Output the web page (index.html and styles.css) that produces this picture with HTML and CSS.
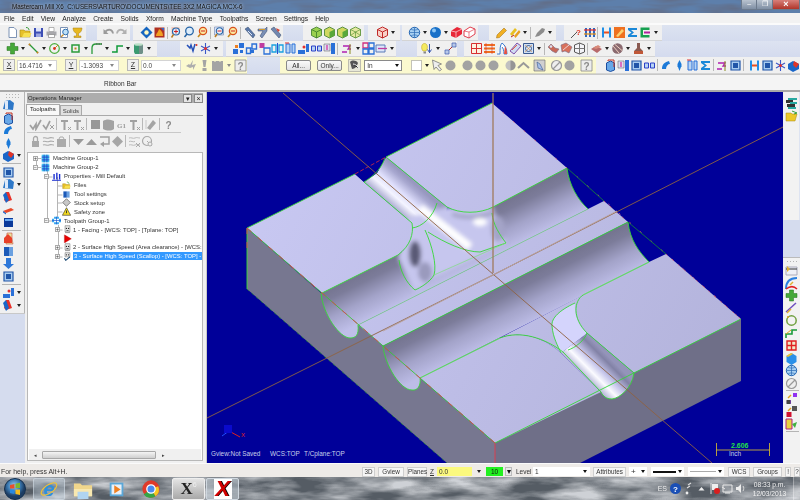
FILE: index.html
```html
<!DOCTYPE html>
<html lang="en">
<head>
<meta charset="utf-8">
<title>Mastercam Mill X6</title>
<link rel="stylesheet" href="styles.css">
</head>
<body>
<svg class="defs" aria-hidden="true">
<defs>
<filter id="cloud" x="0" y="0" width="100%" height="100%"><feTurbulence type="fractalNoise" baseFrequency="0.018 0.07" numOctaves="4" seed="7"/><feColorMatrix type="matrix" values="0 0 0 0 0.62  0 0 0 0 0.64  0 0 0 0 0.67  2.2 0 0 0 -0.7"/></filter>
<filter id="cloud2" x="0" y="0" width="100%" height="100%"><feTurbulence type="fractalNoise" baseFrequency="0.02 0.12" numOctaves="3" seed="3"/><feColorMatrix type="matrix" values="0 0 0 0 0.12  0 0 0 0 0.16  0 0 0 0 0.26  2.6 0 0 0 -1"/></filter>
<filter id="soft" x="-20%" y="-20%" width="140%" height="140%"><feGaussianBlur stdDeviation="2.2"/></filter>
<linearGradient id="floor1" gradientUnits="userSpaceOnUse" x1="450" y1="227.5" x2="470.5" y2="268.5"><stop offset="0" stop-color="#74748f"/><stop offset=".22" stop-color="#7c7c9a"/><stop offset=".6" stop-color="#a3a3c9"/><stop offset="1" stop-color="#bfbfe9"/></linearGradient>
<linearGradient id="floor2" gradientUnits="userSpaceOnUse" x1="500" y1="287" x2="520.5" y2="328"><stop offset="0" stop-color="#74748f"/><stop offset=".22" stop-color="#7c7c9a"/><stop offset=".6" stop-color="#a3a3c9"/><stop offset="1" stop-color="#bdbde7"/></linearGradient>
<linearGradient id="pad" gradientUnits="userSpaceOnUse" x1="260" y1="180" x2="740" y2="430"><stop offset="0" stop-color="#c8c8f2"/><stop offset="1" stop-color="#b2b2da"/></linearGradient>
<linearGradient id="groove1" gradientUnits="userSpaceOnUse" x1="388" y1="203" x2="409" y2="179"><stop offset="0" stop-color="#a9a9d0"/><stop offset=".3" stop-color="#f4f4ff"/><stop offset=".55" stop-color="#ddddfb"/><stop offset=".85" stop-color="#a8a8d0"/><stop offset="1" stop-color="#9898c0"/></linearGradient>
<linearGradient id="groove2" gradientUnits="userSpaceOnUse" x1="578" y1="372" x2="601" y2="349"><stop offset="0" stop-color="#a8a8d0"/><stop offset=".3" stop-color="#fbfbff"/><stop offset=".55" stop-color="#c4c4ea"/><stop offset=".85" stop-color="#8282a6"/><stop offset="1" stop-color="#9494ba"/></linearGradient>
<radialGradient id="orb" cx=".45" cy=".35"><stop offset="0" stop-color="#9fd0f2"/><stop offset=".6" stop-color="#3a78b0"/><stop offset="1" stop-color="#1d3d63"/></radialGradient>

<symbol id="doc" viewBox="0 0 13 13"><path d="M3 1.500h5l2.500 2.500v7.500H3z" fill="#fff" stroke="#7d93b5"/></symbol>
<symbol id="folder" viewBox="0 0 13 13"><path d="M1 11V4h4l1 1h5v6z" fill="#e6c02a" stroke="#a98914" stroke-width=".6"/><path d="M3 11l2-4h7.500l-2 4z" fill="#f7e050"/><path d="M7 1.500c2 0 3 1 3 2.500" fill="none" stroke="#3a9a3a"/></symbol>
<symbol id="disk" viewBox="0 0 13 13"><path d="M2 2h9v9H2z" fill="#3d4fb5"/><path d="M4 2h5v3.500H4z" fill="#dfe4f7"/><path d="M4 7.500h5V11H4z" fill="#9aa5e0"/></symbol>
<symbol id="print" viewBox="0 0 13 13"><path d="M4 1.500h5v4H4z" fill="#fff" stroke="#888" stroke-width=".6"/><path d="M1.500 5.500h10v4h-10z" fill="#a8a8ac"/><path d="M3.500 8.500h6v3h-6z" fill="#fff" stroke="#777" stroke-width=".6"/></symbol>
<symbol id="prev" viewBox="0 0 13 13"><path d="M2.500 1.500h7v10h-7z" fill="#fff" stroke="#7d93b5"/><circle cx="7.500" cy="6" r="2.800" fill="#bfe0f7" stroke="#2d6fb0"/><path d="M5.500 8.500l-2.500 2.500" stroke="#c58a2a" stroke-width="1.300"/></symbol>
<symbol id="cup" viewBox="0 0 13 13"><path d="M2 2h9c0 3-2 5-3.500 5.500V10H10v1.500H3V10h2.500V7.500C4 7 2 5 2 2z" fill="#e8b820" stroke="#a77d10" stroke-width=".5"/></symbol>
<symbol id="undo" viewBox="0 0 13 13"><path d="M3.500 5.500c3-3 7-2 7.500 2" fill="none" stroke="#9a9a9a" stroke-width="1.800"/><path d="M1.500 3v5h5z" fill="#9a9a9a"/></symbol>
<symbol id="redo" viewBox="0 0 13 13"><path d="M9.500 5.500c-3-3-7-2-7.500 2" fill="none" stroke="#b0b0b0" stroke-width="1.800"/><path d="M11.500 3v5h-5z" fill="#b0b0b0"/></symbol>
<symbol id="pan" viewBox="0 0 13 13"><path d="M6.500 .5l6 6-6 6-6-6z" fill="#1565c0"/><circle cx="6.500" cy="6.500" r="2.200" fill="#fff8c0"/></symbol>
<symbol id="fire" viewBox="0 0 13 13"><path d="M1.500 1.500h10v10h-10z" fill="#b03020"/><path d="M3 10c0-3 2-3 3-7 3 2 4 4 4 7z" fill="#f2a020"/><path d="M8 2h3v3z" fill="#306ad0"/></symbol>
<symbol id="lz" viewBox="0 0 13 13"><path d="M1.500 1h8v7h-8z" fill="#f0c8b8"/><circle cx="6" cy="5.500" r="3.500" fill="#dcecfa" stroke="#2866a8" stroke-width="1.200"/><path d="M4 5.500h4M6 3.500v4" stroke="#d02020"/><path d="M3.500 8.500L1.500 11.500" stroke="#b87a20" stroke-width="1.500"/></symbol>
<symbol id="lb" viewBox="0 0 13 13"><circle cx="6.500" cy="5" r="3.800" fill="#dcecfa" stroke="#2866a8" stroke-width="1.300"/><path d="M4 8l-2.500 3" stroke="#2866a8" stroke-width="1.600"/></symbol>
<symbol id="lr" viewBox="0 0 13 13"><circle cx="7" cy="5" r="3.600" fill="#fbeaa0" stroke="#d8501c" stroke-width="1.300"/><path d="M5 5h4" stroke="#d02020"/><path d="M4.500 8l-2.500 3" stroke="#c88a20" stroke-width="1.600"/></symbol>
<symbol id="ld" viewBox="0 0 13 13"><path d="M1.500 1h9v8h-9z" fill="#dce4f6" stroke="#7f93bb" stroke-width=".7"/><circle cx="6.500" cy="5" r="3.200" fill="#eaf3fc" stroke="#2866a8" stroke-width="1.100"/><path d="M4.500 5h4" stroke="#d02020"/><path d="M4 8l-2 3" stroke="#b87a20" stroke-width="1.500"/></symbol>
<symbol id="t1" viewBox="0 0 13 13"><path d="M2 3l3-2 7 8-2 3z" fill="#5b78a8" stroke="#2d4468" stroke-width=".5"/><path d="M5 5l4 4" stroke="#dfe8f8"/></symbol>
<symbol id="t2" viewBox="0 0 13 13"><path d="M2 3h7l2-2v4l-5 7-2-2 3-5H2z" fill="#7a90b6" stroke="#34456a" stroke-width=".5"/><path d="M3 3.500h6" stroke="#d09a30"/></symbol>
<symbol id="t3" viewBox="0 0 13 13"><path d="M2 3l3-2 7 8-2 3z" fill="#7288b0" stroke="#2d4468" stroke-width=".5"/><path d="M7 2l4 2-2 2z" fill="#d84030"/></symbol>
<symbol id="cg" viewBox="0 0 13 13"><path d="M6.500 1l5 2.500v6l-5 2.500-5-2.500v-6z" fill="#9ad050" stroke="#3b7a2a" stroke-width=".8"/><path d="M1.500 3.500l5 2.500 5-2.500M6.500 6v6" fill="none" stroke="#3b7a2a" stroke-width=".8"/></symbol>
<symbol id="cg2" viewBox="0 0 13 13"><path d="M6.500 1l5 2.500v6l-5 2.500-5-2.500v-6z" fill="#d0d860" stroke="#3b7a2a" stroke-width=".8"/><path d="M6.500 6l5-2.500v6l-5 2.500z" fill="#58a83a"/></symbol>
<symbol id="cg3" viewBox="0 0 13 13"><path d="M6.500 1l5 2.500v6l-5 2.500-5-2.500v-6z" fill="#e4e8a0" stroke="#4c8a2a" stroke-width=".8"/><path d="M1.500 3.500l5 2.500 5-2.500M6.500 6v6M1.500 9.500l5-3.500 5 3.500" fill="none" stroke="#4c8a2a" stroke-width=".6"/></symbol>
<symbol id="cr" viewBox="0 0 13 13"><path d="M6.500 1l5 2.500v6l-5 2.500-5-2.500v-6z" fill="#f8d0c8" stroke="#c02828" stroke-width="1"/><path d="M1.500 3.500l5 2.500 5-2.500M6.500 6v6" fill="none" stroke="#c02828"/></symbol>
<symbol id="globe" viewBox="0 0 13 13"><circle cx="6.500" cy="6.500" r="5.200" fill="#a8d0f2" stroke="#2a6ab5"/><path d="M1.500 6.500h10M6.500 1.300v10.400M3 3c2 1.500 5 1.500 7 0M3 10c2-1.500 5-1.500 7 0" fill="none" stroke="#2a6ab5" stroke-width=".7"/></symbol>
<symbol id="ball" viewBox="0 0 13 13"><circle cx="6.500" cy="6.500" r="5.500" fill="#1870c8"/><circle cx="5" cy="4.500" r="2" fill="#8cc6f5"/></symbol>
<symbol id="rc" viewBox="0 0 13 13"><path d="M1 5l6-4 5 2v5l-6 4-5-2z" fill="#e82838"/><path d="M6 6l6-3M6 6v6M6 6L1 5" stroke="#fff" stroke-width=".6"/></symbol>
<symbol id="rco" viewBox="0 0 13 13"><path d="M1 5l6-4 5 2v5l-6 4-5-2z" fill="#fff" stroke="#e04050"/><path d="M6 6l6-3M6 6v6M6 6L1 5" stroke="#e04050" stroke-width=".7"/></symbol>
<symbol id="pen" viewBox="0 0 13 13"><path d="M2 9L9 2l2.500 2.500-7 7L1.500 12z" fill="#f2b020" stroke="#9a6a10" stroke-width=".5"/></symbol>
<symbol id="pen2" viewBox="0 0 13 13"><path d="M2 8l5-6 2 2-5 6z" fill="#e8c020"/><path d="M6 10l5-6 1.500 2-5 6z" fill="#e8a020"/><path d="M3 11l3-2" stroke="#c02020"/></symbol>
<symbol id="gt" viewBox="0 0 13 13"><path d="M2 11l2-4 5-5 3 1-1 3-5 4z" fill="#8c8c8c"/></symbol>
<symbol id="qa" viewBox="0 0 13 13"><path d="M1 12l6-6" stroke="#555"/><text x="6" y="8.500" class="qm">?</text></symbol>
<symbol id="bars" viewBox="0 0 13 13"><path d="M2 2h2v9H2zM6 2h2v9H6zM10 2h2v9h-2z" fill="#2f67c0"/><path d="M1 4h12" stroke="#e03030" stroke-width="1.300"/><path d="M1 8h12" stroke="#e09020" stroke-width="1.300"/></symbol>
<symbol id="prop" viewBox="0 0 13 13"><path d="M2 3h2v8H2zM6 1h2v10H6zM10 3h2v8h-2z" fill="#1c2fd0"/><path d="M0 12h13" stroke="#1c2fd0" stroke-width="1.400"/></symbol>
<symbol id="hb" viewBox="0 0 13 13"><path d="M2 1.500h2v10H2zM9 1.500h2v10H9z" fill="#2090e8"/><path d="M4 6.500h5" stroke="#e85020" stroke-width="2"/></symbol>
<symbol id="or" viewBox="0 0 13 13"><path d="M1 1h11v11H1z" fill="#ef7020"/><path d="M3 10l6-7 2 2-6 6z" fill="#fbd070"/></symbol>
<symbol id="sg" viewBox="0 0 13 13"><path d="M2 2h9v2H5l3 2.500L5 9h6v2H2V9l3.500-2.500L2 4z" fill="#1a88d8"/></symbol>
<symbol id="gb" viewBox="0 0 13 13"><path d="M1.500 1.500h9v2.500h-6.500v5h6.500v2.500h-9z" fill="#16a050"/><path d="M5 5.500h6v2H5z" fill="#b020a0"/></symbol>
<symbol id="plus" viewBox="0 0 13 13"><path d="M4.500 1h4v3.500H12v4H8.500V12h-4V8.500H1v-4h3.500z" fill="#46a83a" stroke="#25701f" stroke-width=".5"/></symbol>
<symbol id="ln" viewBox="0 0 13 13"><path d="M2 2l9 9" stroke="#2a9a3a" stroke-width="1.200"/><circle cx="2.500" cy="2.500" r="1" fill="#d08020"/><circle cx="10.500" cy="10.500" r="1" fill="#d08020"/></symbol>
<symbol id="ci" viewBox="0 0 13 13"><circle cx="6.500" cy="6.500" r="4.800" fill="none" stroke="#4cae3c" stroke-width="1.200"/><circle cx="6.500" cy="6.500" r="1.400" fill="#d83020"/><path d="M7 6l3-3" stroke="#d08020"/></symbol>
<symbol id="rg" viewBox="0 0 13 13"><path d="M3 3h7v7H3z" fill="none" stroke="#2a9a3a" stroke-width="1.500"/><path d="M5.500 5.500h2v2h-2z" fill="#c08020"/></symbol>
<symbol id="fl" viewBox="0 0 13 13"><path d="M2 12V6c0-3 1-4 4-4h6" fill="none" stroke="#2a9a3a" stroke-width="1.300"/><path d="M6 2h6" stroke="#555" stroke-dasharray="1.500 1"/></symbol>
<symbol id="pa" viewBox="0 0 13 13"><path d="M1 10h5V4h6" fill="none" stroke="#0f9a38" stroke-width="1.500"/></symbol>
<symbol id="cy" viewBox="0 0 13 13"><path d="M2 2h9v8l-1 2H3l-1-2z" fill="#3a9a70"/><path d="M7 2h4v8l-1 2H7z" fill="#6f8f88"/><ellipse cx="6.500" cy="2.500" rx="4.500" ry="1.300" fill="#bce0c8"/></symbol>
<symbol id="wi" viewBox="0 0 13 13"><path d="M1 3l3 3 1-3 2 6 2-7" fill="none" stroke="#2550b8" stroke-width="1.500"/><circle cx="10.500" cy="3" r="1" fill="#d83020"/></symbol>
<symbol id="xs" viewBox="0 0 13 13"><path d="M6.500 1v11M2 4l9 5M11 4L2 9" stroke="#3a58c8" stroke-width="1.100"/><circle cx="6.500" cy="6.500" r="1.500" fill="#e03030"/></symbol>
<symbol id="tpg" viewBox="0 0 13 13"><path d="M3 1h7v3h3v5h-3v3H3V9H0V4h3z" fill="#3aa8f0"/><path d="M3 4h7v5H3z" fill="#fff"/><path d="M0 6.500h13M6.500 1v11" stroke="#1c5ad0"/></symbol>
<symbol id="x1" viewBox="0 0 13 13"><path d="M1 7h5v5H1zM7 1h5v5H7z" fill="#2a70d8"/><path d="M3 3h3v3H3z" fill="#ef8020"/><path d="M8 8h3v3H8z" fill="#2a70d8"/></symbol>
<symbol id="x2" viewBox="0 0 13 13"><path d="M1.500 6h4v5.500h-4zM7 2h4.500v5H7z" fill="none" stroke="#2a70d8" stroke-width="1.400"/><path d="M6 8h3v3H6z" fill="#2a70d8"/></symbol>
<symbol id="x3" viewBox="0 0 13 13"><path d="M1.500 1h5v5h-5z" fill="#c03ca0"/><path d="M6 6h6v6H6z" fill="none" stroke="#2a70d8" stroke-width="1.300"/></symbol>
<symbol id="x4" viewBox="0 0 13 13"><path d="M1 3h4v7H1zM8 3h4v7H8z" fill="none" stroke="#18a0e0" stroke-width="1.300"/><path d="M6.500 1v11" stroke="#2a50d0"/></symbol>
<symbol id="x5" viewBox="0 0 13 13"><path d="M2 2h4v9H2zM8 2h3v9H8z" fill="#b8d4f4" stroke="#2a70d8"/><path d="M1 1h4" stroke="#e03030"/></symbol>
<symbol id="x6" viewBox="0 0 13 13"><path d="M1 8h7v4H1z" fill="#2a70d8"/><path d="M9 2h3v8H9z" fill="#2a70d8"/><circle cx="7" cy="5" r="1.500" fill="#e03030"/></symbol>
<symbol id="x7" viewBox="0 0 13 13"><path d="M1.500 4h4v5h-4zM7.500 4h4v5h-4z" fill="#b8d4f4" stroke="#2a40c8"/></symbol>
<symbol id="x8" viewBox="0 0 13 13"><path d="M1 2h6v7H1z" fill="#dcdcf0" stroke="#555" stroke-width=".5"/><path d="M8 1h4v11H8z" fill="#2a70d8"/><path d="M3 3h2v5H3z" fill="#d870c0"/></symbol>
<symbol id="an" viewBox="0 0 13 13"><path d="M2 4h7l-2 3h3M6 10H1" fill="none" stroke="#b020b0" stroke-width="1.300"/><path d="M9 2v10" stroke="#8a8a20"/></symbol>
<symbol id="gd" viewBox="0 0 13 13"><path d="M1 1h5v5H1z" fill="none" stroke="#d03080" stroke-width="1.300"/><path d="M7 1h5v5H7zM1 7h5v5H1zM7 7h5v5H7z" fill="none" stroke="#2a70d8" stroke-width="1.300"/></symbol>
<symbol id="mg" viewBox="0 0 13 13"><path d="M1 1h11v11H1z" fill="#46c4ee"/><path d="M1 4.500h11M1 8.500h11M4.500 1v11M8.500 1v11" stroke="#1c34c8" stroke-width="1.100"/></symbol>
<symbol id="ly" viewBox="0 0 13 13"><path d="M1 3h9v7H1z" fill="#dce6fa" stroke="#5a7ab8"/><path d="M3 6.500h9" stroke="#c03ca0" stroke-width="1.300"/></symbol>
<symbol id="bu" viewBox="0 0 13 13"><path d="M4 9C2 7 2 1.500 5.500 1.500S9 7 7 9z" fill="#f4ea60" stroke="#c0a820" stroke-width=".6"/><path d="M4.500 9.500h2.500v2H4.500z" fill="#888"/><path d="M10.500 2v9M8.500 7.500l2 3 2-3" fill="none" stroke="#3a5ab0"/></symbol>
<symbol id="ch" viewBox="0 0 13 13"><path d="M2 11l9-9" stroke="#b03030"/><path d="M1 8h4v4H1zM8 1h4v4H8z" fill="#b8c8e8" stroke="#3a5ab0" stroke-width=".7"/></symbol>
<symbol id="rt" viewBox="0 0 13 13"><path d="M1.500 1.500h10v10h-10z" fill="#fdf2e0" stroke="#d83030"/><path d="M6.500 1.500v10M1.500 6.500h10" stroke="#d83030"/></symbol>
<symbol id="rs" viewBox="0 0 13 13"><path d="M1 2h11v2H1zM1 5.500h11v2H1zM1 9h11v2H1z" fill="#ef7020"/><path d="M3 1v11M9 1v11" stroke="#d83030" stroke-width=".6"/></symbol>
<symbol id="sa" viewBox="0 0 13 13"><path d="M1 12h3C4 7 4 3 6 1c3 2 5 6 5 11H8C8 8 7 6 6 5" fill="#fff" stroke="#3a7ad0"/><path d="M8 12h3C11 8 10 6 9 4z" fill="#e85040"/></symbol>
<symbol id="sk" viewBox="0 0 13 13"><path d="M1 9l7-8 4 3-7 8z" fill="#d0dcf4" stroke="#8050a8"/><path d="M3 8l5-5" stroke="#e86040"/></symbol>
<symbol id="ho" viewBox="0 0 13 13"><path d="M1.500 1.500h10v10h-10z" fill="#cfe0f6" stroke="#3a5a90"/><circle cx="6.500" cy="6.500" r="3" fill="none" stroke="#3a5a90"/><path d="M3 3l7 7M10 3l-7 7" stroke="#e09040" stroke-width=".6"/></symbol>
<symbol id="m1" viewBox="0 0 13 13"><path d="M1 5l3-3 4 4 4 1-3 4-4-2z" fill="#c86858" stroke="#7a6a80" stroke-width=".6"/><circle cx="4" cy="4.500" r="1.300" fill="#dce4f4"/></symbol>
<symbol id="m2" viewBox="0 0 13 13"><path d="M1 3l5-2 6 4-3 6-4-2-3 1z" fill="#d8705a" stroke="#7a6a80" stroke-width=".6"/><path d="M3 8l6-5" stroke="#f0d0d0"/></symbol>
<symbol id="m3" viewBox="0 0 13 13"><path d="M1.500 3l5-2 5 2v7l-5 2-5-2z" fill="#f4f4f8" stroke="#555"/><path d="M6.500 1v11M1.500 6.500h10" stroke="#777"/></symbol>
<symbol id="m4" viewBox="0 0 13 13"><path d="M1 7l5-3 6 3-5 4z" fill="#b86a6a"/><path d="M3 6l5-3 3 2-5 2z" fill="#d88a7a"/></symbol>
<symbol id="m5" viewBox="0 0 13 13"><circle cx="6.500" cy="6.500" r="5.300" fill="#8a6a70"/><path d="M2 4l6 7M4 2.500l7 6" stroke="#f0d0c0"/></symbol>
<symbol id="m6" viewBox="0 0 13 13"><path d="M5 1h3v5l3 3v3H2V9l3-3z" fill="#8a5a50"/><path d="M2 9h9v3H2z" fill="#c05838"/></symbol>
<symbol id="gdot" viewBox="0 0 13 13"><circle cx="6.500" cy="6.500" r="5" fill="#a2a2a2"/></symbol>
<symbol id="gdotl" viewBox="0 0 13 13"><circle cx="6.500" cy="6.500" r="5" fill="#c0c0c0"/><path d="M6.500 1.500a5 5 0 0 1 0 10z" fill="#959595"/></symbol>
<symbol id="bolt" viewBox="0 0 13 13"><path d="M1 7l3-2 1 1 3-5-1 5 4-1-3 6 0-3-3 1z" fill="#adadad"/></symbol>
<symbol id="excl" viewBox="0 0 13 13"><path d="M4.500 1h4l-1 7h-2z" fill="#a4a4a4"/><path d="M4.500 9h4v3h-4z" fill="#a4a4a4"/></symbol>
<symbol id="warn" viewBox="0 0 13 13"><path d="M6.500 1l6 11H.5z" fill="#f0d820" stroke="#222" stroke-width=".8"/><path d="M6.500 5v4" stroke="#222" stroke-width="1.200"/></symbol>
<symbol id="gsq" viewBox="0 0 13 13"><path d="M1 2h2l1 1 1-1h3l1 1 1-1h2v10H1z" fill="#a4a4a4"/></symbol>
<symbol id="qb" viewBox="0 0 13 13"><path d="M1 1h11v11H1z" fill="#ededed" stroke="#888" stroke-width=".8"/><text x="6.500" y="10.500" class="qg">?</text></symbol>
<symbol id="dsq" viewBox="0 0 13 13"><path d="M1.500 1.500h10v10h-10z" fill="#fff" stroke="#888" stroke-dasharray="1 1"/></symbol>
<symbol id="arw" viewBox="0 0 13 13"><path d="M1.500 1l9 4-3.500 1.500 3.500 4-2 1.500-3.500-4-2 2.500z" fill="#eee" stroke="#777" stroke-width=".8"/></symbol>
<symbol id="arch" viewBox="0 0 13 13"><path d="M1 9l5.500-5L12 9" fill="none" stroke="#9a9a9a" stroke-width="2"/></symbol>
<symbol id="sball" viewBox="0 0 13 13"><path d="M.5.500h12v12H.500z" fill="#e8e8d8" stroke="#999" stroke-width=".6"/><path d="M2 3c2-2 6-2 8 1-1 3-3 6-6 6z" fill="#555"/><path d="M5 5c2 0 5 2 6 5" stroke="#fff"/></symbol>
<symbol id="tick" viewBox="0 0 13 13"><path d="M1 1h11v11H1z" fill="#d0d0d0" stroke="#666" stroke-width=".6"/><path d="M4 3l1 6 5 2-3-6z" fill="#a8c0e8" stroke="#38588f" stroke-width=".6"/></symbol>
<symbol id="stop" viewBox="0 0 13 13"><circle cx="6.500" cy="6.500" r="5" fill="#eee" stroke="#999" stroke-width="1.200"/><path d="M3 10l7-7" stroke="#999" stroke-width="1.200"/></symbol>
<symbol id="sq9" viewBox="0 0 13 13"><path d="M2 2h9v9H2z" fill="#979797"/></symbol>
<symbol id="vf" viewBox="0 0 13 13"><path d="M1 10l2-8 5-1 4 3-1 7z" fill="#2e78c8"/><path d="M3 2h3v8H3z" fill="#dde9f9"/></symbol>
<symbol id="vb" viewBox="0 0 13 13"><path d="M2.500 4v7l4 1.500 4-1.500V4L6.500 2z" fill="#68a8e8" stroke="#1c4fa0"/><path d="M4 2V1h6v7" stroke="#c03020" fill="none"/></symbol>
<symbol id="va" viewBox="0 0 13 13"><path d="M2 10C2 5 5 3 9 2l1 3C8 5 6 7 6 10z" fill="#1c7ad8"/></symbol>
<symbol id="vg" viewBox="0 0 13 13"><path d="M6.500 1l2 4h-4zM4.500 5h4v3h-4zM5 8h3l-1.500 4z" fill="#1c7ad8"/></symbol>
<symbol id="vc" viewBox="0 0 13 13"><path d="M1 5l5-3 6 3v5l-6 3-5-3z" fill="#1a66c8"/><path d="M7 2l5 3-3 4-3-3z" fill="#e03428"/></symbol>
<symbol id="vh" viewBox="0 0 13 13"><path d="M2 2h9v9H2z" fill="#a8ccf0" stroke="#2055a8" stroke-width="1.200"/><path d="M4 4h5v5H4z" fill="#2055a8"/></symbol>
<symbol id="vt" viewBox="0 0 13 13"><path d="M4 1h3l3 8-6 2-2-2z" fill="#e83028"/><path d="M1 4l3-3 3 8-3 3z" fill="#1a66c8"/></symbol>
<symbol id="vs" viewBox="0 0 13 13"><path d="M1 8l8-3 3 2-8 3z" fill="#e84828"/><path d="M1 8l3 2v1.500L1 9.500z" fill="#2468c8"/></symbol>
<symbol id="vd" viewBox="0 0 13 13"><path d="M2 2h9v9H2z" fill="#0c3a9a"/><path d="M3 3l8 0v2H3z" fill="#68a8f0"/></symbol>
<symbol id="vo" viewBox="0 0 13 13"><path d="M5 1h5v5l1 6H4z" fill="#e8e0a0" stroke="#c03020" stroke-width=".5"/><path d="M2 6l4-4 4 4v5H2z" fill="#e84028"/></symbol>
<symbol id="vk" viewBox="0 0 13 13"><path d="M2 2h5v9H2z" fill="#1c5ab8"/><path d="M7 2h4v9H7z" fill="#6aa0e0"/></symbol>
<symbol id="vw" viewBox="0 0 13 13"><path d="M4 1h5v6h3l-5.500 5L1 7h3z" fill="#2e78d8"/></symbol>
<symbol id="r1" viewBox="0 0 13 13"><path d="M1 3h7v3H1zM2 7h8v3H2z" fill="#333"/><path d="M3 1h9v2H3zM5 5h7v2H5zM3 10h8v2H3z" fill="#28a8a0"/></symbol>
<symbol id="r2" viewBox="0 0 13 13"><path d="M1 3h5l1 1h5l-2 7H1z" fill="#ecc82c" stroke="#a88a10" stroke-width=".5"/><path d="M7 1l5 2-3 1" stroke="#3aa040" fill="none"/></symbol>
<symbol id="r3" viewBox="0 0 13 13"><path d="M1 3h11v8H1z" fill="#eef0f6" stroke="#aab"/><path d="M1 5h11" stroke="#333"/><path d="M2 2v6l3-3z" fill="#e0b030"/></symbol>
<symbol id="r4" viewBox="0 0 13 13"><path d="M1 12C1 5 5 1 12 1" fill="none" stroke="#2a80e0" stroke-width="2"/><path d="M1 12C5 9 9 9 12 12" fill="none" stroke="#e02020" stroke-width="1.500"/><path d="M5 8l3-3" stroke="#e0b030" stroke-width="1.500"/></symbol>
<symbol id="r5" viewBox="0 0 13 13"><path d="M1 10l10-9" stroke="#7050c0" stroke-width="1.500"/><path d="M2 11l4-4" stroke="#e0b030" stroke-width="1.500"/></symbol>
<symbol id="r6" viewBox="0 0 13 13"><circle cx="6.500" cy="6.500" r="4.700" fill="none" stroke="#70a040" stroke-width="1.500"/><circle cx="3" cy="3" r="1" fill="#d8a020"/></symbol>
<symbol id="r7" viewBox="0 0 13 13"><path d="M1 11V7h6V3h5" fill="none" stroke="#1a9a3a" stroke-width="1.600"/><path d="M1 7l5-4" stroke="#e0a020"/></symbol>
<symbol id="r8" viewBox="0 0 13 13"><path d="M2 2h9v9H2z" fill="#f0e8c8" stroke="#e02020" stroke-width="1.400"/><path d="M6.500 2v9M2 6.500h9" stroke="#e02020" stroke-width="1.400"/></symbol>
<symbol id="r9" viewBox="0 0 13 13"><path d="M6.500 1l5 3v6l-5 3-5-3V4z" fill="#2a90e8"/><path d="M1 4l5-3 2 1-5 3z" fill="#f0c030"/></symbol>
<symbol id="r10" viewBox="0 0 13 13"><path d="M1 10l5-2v4zM8 1h4v4H8z" fill="#9030f0"/><path d="M1.500 8h4v4h-4z" fill="#444"/><path d="M3 6l3-3" stroke="#e0a020" stroke-width="1.400"/></symbol>
<symbol id="r11" viewBox="0 0 13 13"><path d="M7 1h5v5H7z" fill="#555"/><path d="M1.500 7h5v5h-5z" fill="#d01030"/><path d="M3 6l3-3" stroke="#e0a020" stroke-width="1.400"/></symbol>
<symbol id="r12" viewBox="0 0 13 13"><path d="M1 2h6v10H1z" fill="#e8d040" stroke="#b02080"/><path d="M7 7l5-2-2 6z" fill="#40b040"/></symbol>
<symbol id="t-ok" viewBox="0 0 13 13"><path d="M1 7l3 4 3-5 0 5 5-9" fill="none" stroke="#a0a0a0" stroke-width="1.700"/></symbol>
<symbol id="t-x" viewBox="0 0 13 13"><path d="M1 7l3 4 4-8" fill="none" stroke="#a0a0a0" stroke-width="1.700"/><path d="M8 7l4 4M12 7l-4 4" stroke="#a0a0a0"/></symbol>
<symbol id="t-t" viewBox="0 0 13 13"><path d="M2 2h7v2H6.500v8h-2V4H2z" fill="#a0a0a0"/><path d="M9 9l3 3M12 9l-3 3" stroke="#a0a0a0"/></symbol>
<symbol id="t-bk" viewBox="0 0 13 13"><path d="M1 3c3-2 7-2 11 0v8c-3 2-7 2-11 0z" fill="#a2a2a2"/></symbol>
<symbol id="t-g" viewBox="0 0 13 13"><text x="6.500" y="10" class="qg1">G1</text></symbol>
<symbol id="t-pen" viewBox="0 0 13 13"><path d="M2 10l6-8 3 3-6 7z" fill="#a4a4a4"/><path d="M1 2v9" stroke="#c8c8c8"/></symbol>
<symbol id="t-q" viewBox="0 0 13 13"><text x="6.500" y="11" class="qg">?</text></symbol>
<symbol id="t-lock" viewBox="0 0 13 13"><path d="M3 6h7v6H3z" fill="#a8a8a8"/><path d="M4.500 6V3.500a2 2 0 0 1 4 0V6" fill="none" stroke="#a8a8a8" stroke-width="1.300"/></symbol>
<symbol id="t-wav" viewBox="0 0 13 13"><path d="M1 3c2-1 4 1 6 0s3 0 5 0M1 6.500c2-1 4 1 6 0s3 0 5 0M1 10c2-1 4 1 6 0s3 0 5 0" fill="none" stroke="#aaa" stroke-width="1.100"/></symbol>
<symbol id="t-lock2" viewBox="0 0 13 13"><path d="M2 4h9v8H2z" fill="#aaa"/><path d="M4 4l1-2h3l1 2" fill="none" stroke="#aaa"/></symbol>
<symbol id="t-dn" viewBox="0 0 13 13"><path d="M1 4h11L6.500 10z" fill="#9a9a9a"/></symbol>
<symbol id="t-up" viewBox="0 0 13 13"><path d="M1 10h11L6.500 4z" fill="#9a9a9a"/></symbol>
<symbol id="t-rc" viewBox="0 0 13 13"><path d="M2 2h9v7H5" fill="none" stroke="#a0a0a0" stroke-width="1.500"/><path d="M6 6.500V12l-4-3z" fill="#a0a0a0"/></symbol>
<symbol id="t-dia" viewBox="0 0 13 13"><path d="M6.500 1l5.500 5.500-5.500 5.500L1 6.500z" fill="#a6a6a6"/></symbol>
<symbol id="stock" viewBox="0 0 13 13"><path d="M6.500 1l5.500 5.500-5.500 5.500L1 6.500z" fill="#c8c8c8" stroke="#333" stroke-width=".8"/></symbol>
<symbol id="t-ws" viewBox="0 0 13 13"><path d="M1 3c2-1 4 1 6 0s3 0 5 0M1 6.500c2-1 4 1 6 0M1 10c2-1 4 1 6 0s3 0 5 0" fill="none" stroke="#bbb"/><path d="M8 8l4 4M12 8l-4 4" stroke="#aaa"/></symbol>
<symbol id="t-rf" viewBox="0 0 13 13"><circle cx="6" cy="6" r="4.500" fill="none" stroke="#aaa" stroke-width="1.200"/><path d="M6 6l5 5" stroke="#aaa"/><circle cx="9" cy="9" r="2" fill="#eee" stroke="#aaa"/></symbol>
<symbol id="flag" viewBox="0 0 13 13"><path d="M2 1v12M2.500 1.500L12 7l-9.500 5.500z" fill="#e80000" stroke="#c00000" stroke-width=".6"/></symbol>
<symbol id="op" viewBox="0 0 13 13"><path d="M3 1h7v9H3z" fill="#e4e4e4" stroke="#666" stroke-width=".7"/><circle cx="5" cy="5" r=".9" fill="#222"/><circle cx="8" cy="5" r=".9" fill="#222"/><path d="M5 8h3" stroke="#222"/><path d="M3 11h7" stroke="#888" stroke-width="1.200"/></symbol>
<symbol id="opk" viewBox="0 0 13 13"><path d="M3 1h7v6H3z" fill="#e4e4e4" stroke="#666" stroke-width=".7"/><circle cx="5" cy="4" r=".9" fill="#222"/><circle cx="8" cy="4" r=".9" fill="#222"/><path d="M2 9l2 3 6-5" fill="none" stroke="#14436e" stroke-width="1.500"/></symbol>
</defs>
</svg>

<div class="app">
  <header class="title">
    <svg class="wall" aria-hidden="true"><rect width="800" height="13" fill="#5d7fab"/><rect width="800" height="13" filter="url(#cloud2)"/></svg>
    <span class="title-text">Mastercam Mill X6&nbsp; C:\USERS\ARTURO\DOCUMENTS\TEE 3X2 MAGICA.MCX-6</span>
    <div class="winbtns"><span class="wb">&#8211;</span><span class="wb">&#10064;</span><span class="wb wb-x">&#215;</span></div>
  </header>

  <nav class="menu"><span>File</span><span>Edit</span><span>View</span><span>Analyze</span><span>Create</span><span>Solids</span><span>Xform</span><span>Machine Type</span><span>Toolpaths</span><span>Screen</span><span>Settings</span><span>Help</span></nav>

  <div class="row r1">
    <div class="tb p6"><svg class="i"><use href="#doc"/></svg><svg class="i"><use href="#folder"/></svg><svg class="i"><use href="#disk"/></svg><svg class="i"><use href="#print"/></svg><svg class="i"><use href="#prev"/></svg><svg class="i"><use href="#cup"/></svg><b class="g g2"></b></div>
    <b class="g g11"></b>
    <div class="tb p4"><svg class="i"><use href="#undo"/></svg><svg class="i"><use href="#redo"/></svg><b class="g g2"></b></div>
    <b class="g g3"></b>
    <div class="tb p7"><svg class="i"><use href="#pan"/></svg><svg class="i"><use href="#fire"/></svg><b class="s"></b><svg class="i"><use href="#lz"/></svg><svg class="i"><use href="#lb"/></svg><svg class="i"><use href="#lr"/></svg><b class="s"></b><svg class="i"><use href="#ld"/></svg><svg class="i"><use href="#lr"/></svg><b class="s"></b><svg class="i"><use href="#t1"/></svg><svg class="i"><use href="#t2"/></svg><svg class="i"><use href="#t3"/></svg><b class="g g1"></b></div>
    <b class="g g20"></b>
    <div class="tb p7"><svg class="i"><use href="#cg"/></svg><svg class="i"><use href="#cg2"/></svg><svg class="i"><use href="#cg2"/></svg><svg class="i"><use href="#cg3"/></svg><b class="g g2"></b></div>
    <b class="g g4"></b>
    <div class="tb p8"><svg class="i"><use href="#cr"/></svg><b class="c"></b><b class="g g3"></b></div>
    <b class="g g2"></b>
    <div class="tb p6"><svg class="i"><use href="#globe"/></svg><b class="c"></b><svg class="i"><use href="#ball"/></svg><b class="c"></b><svg class="i"><use href="#rc"/></svg><svg class="i"><use href="#rco"/></svg><b class="g g2"></b></div>
    <b class="g g11"></b>
    <div class="tb p6"><svg class="i"><use href="#pen"/></svg><svg class="i"><use href="#pen2"/></svg><b class="c"></b><b class="s"></b><svg class="i"><use href="#gt"/></svg><b class="c"></b><b class="g g2"></b></div>
    <b class="g g8"></b>
    <div class="tb p6"><svg class="i"><use href="#qa"/></svg><svg class="i"><use href="#bars"/></svg><b class="s"></b><svg class="i"><use href="#hb"/></svg><svg class="i"><use href="#or"/></svg><svg class="i"><use href="#sg"/></svg><svg class="i"><use href="#gb"/></svg><b class="c"></b><b class="g g2"></b></div>
  </div>

  <div class="row r2">
    <div class="tb p6"><svg class="i"><use href="#plus"/></svg><b class="c"></b><svg class="i"><use href="#ln"/></svg><b class="c"></b><svg class="i"><use href="#ci"/></svg><b class="c"></b><svg class="i"><use href="#rg"/></svg><b class="c"></b><svg class="i"><use href="#fl"/></svg><b class="c"></b><svg class="i"><use href="#pa"/></svg><b class="c"></b><svg class="i"><use href="#cy"/></svg><b class="c"></b><b class="g g4"></b></div>
    <b class="g g23"></b>
    <div class="tb p4"><b class="g g1"></b><svg class="i"><use href="#wi"/></svg><svg class="i"><use href="#xs"/></svg><b class="c"></b><b class="g g3"></b></div>
    <b class="g g3"></b>
    <div class="tb p6"><svg class="i"><use href="#x1"/></svg><svg class="i"><use href="#x2"/></svg><svg class="i"><use href="#x3"/></svg><svg class="i"><use href="#x4"/></svg><svg class="i"><use href="#x5"/></svg><svg class="i"><use href="#x6"/></svg><svg class="i"><use href="#x7"/></svg><svg class="i"><use href="#x8"/></svg><b class="s"></b><b class="g g1"></b><svg class="i"><use href="#an"/></svg><b class="c"></b><svg class="i"><use href="#gd"/></svg><svg class="i"><use href="#ly"/></svg><b class="c"></b></div>
    <b class="g g21"></b>
    <div class="tb p2"><svg class="i"><use href="#bu"/></svg><b class="g g2"></b><b class="c"></b><b class="g g2"></b><svg class="i"><use href="#ch"/></svg></div>
    <b class="g g7"></b>
    <div class="tb p6"><svg class="i"><use href="#rt"/></svg><svg class="i"><use href="#rs"/></svg><svg class="i"><use href="#sa"/></svg><svg class="i"><use href="#sk"/></svg><svg class="i"><use href="#ho"/></svg><b class="c"></b><b class="s"></b><svg class="i"><use href="#m1"/></svg><svg class="i"><use href="#m2"/></svg><svg class="i"><use href="#m3"/></svg><b class="s"></b><svg class="i"><use href="#m4"/></svg><b class="c"></b><svg class="i"><use href="#m5"/></svg><b class="c"></b><svg class="i"><use href="#m6"/></svg><b class="c"></b><b class="g g2"></b></div>
  </div>

  <div class="row r3">
    <div class="ybar coords">
      <span class="ax">X</span><span class="field f40">16.4716</span>
      <b class="g g8"></b>
      <span class="ax">Y</span><span class="field f40">-1.3093</span>
      <b class="g g8"></b>
      <span class="ax">Z</span><span class="field f40">0.0</span>
      <b class="g g4"></b>
      <svg class="i"><use href="#bolt"/></svg><svg class="i"><use href="#excl"/></svg><svg class="i"><use href="#gsq"/></svg><b class="c cg1"></b><svg class="i"><use href="#qb"/></svg>
    </div>
    <b class="g g33"></b>
    <div class="ybar sel">
      <button class="btn b25">All...</button><button class="btn b25">Only...</button>
      <svg class="i"><use href="#sball"/></svg>
      <b class="g g3"></b>
      <span class="combo">In</span>
      <b class="g g8"></b>
      <svg class="i"><use href="#dsq"/></svg><b class="c"></b><svg class="i"><use href="#arw"/></svg><svg class="i"><use href="#gdot"/></svg>
      <b class="g g4"></b>
      <svg class="i"><use href="#gdot"/></svg><svg class="i"><use href="#gdot"/></svg><svg class="i"><use href="#gdot"/></svg>
      <b class="g g4"></b>
      <svg class="i"><use href="#gdotl"/></svg><svg class="i"><use href="#arch"/></svg>
      <b class="g g3"></b>
      <svg class="i"><use href="#tick"/></svg>
      <b class="g g4"></b>
      <svg class="i"><use href="#stop"/></svg><svg class="i"><use href="#gdot"/></svg>
      <b class="g g4"></b>
      <svg class="i"><use href="#qb"/></svg>
    </div>
    <div class="tb tbe p8">
      <svg class="i"><use href="#vb"/></svg><svg class="i"><use href="#x8"/></svg><svg class="i"><use href="#vh"/></svg><svg class="i"><use href="#x7"/></svg><b class="s"></b>
      <svg class="i"><use href="#va"/></svg><svg class="i"><use href="#vg"/></svg><svg class="i"><use href="#x5"/></svg><svg class="i"><use href="#sg"/></svg><b class="s"></b>
      <svg class="i"><use href="#an"/></svg><svg class="i"><use href="#vh"/></svg><b class="s"></b>
      <b class="g g2"></b><svg class="i"><use href="#hb"/></svg><svg class="i"><use href="#vh"/></svg><svg class="i"><use href="#xs"/></svg><svg class="i"><use href="#vc"/></svg>
    </div>
  </div>

  <div class="ribbon"><span>Ribbon Bar</span></div>

  <main class="body">
    <aside class="leftbar">
      <div class="grip"></div>
      <svg class="i v"><use href="#vf"/></svg><svg class="i v"><use href="#vb"/></svg><svg class="i v"><use href="#va"/></svg><svg class="i v"><use href="#vg"/></svg>
      <div class="vc"><svg class="i"><use href="#vc"/></svg><b class="c"></b></div>
      <hr class="hs">
      <svg class="i v"><use href="#vh"/></svg>
      <div class="vc"><svg class="i"><use href="#vf"/></svg><b class="c"></b></div>
      <svg class="i v"><use href="#vt"/></svg><svg class="i v"><use href="#vs"/></svg><svg class="i v"><use href="#vd"/></svg>
      <hr class="hs">
      <svg class="i v"><use href="#vo"/></svg><svg class="i v"><use href="#vk"/></svg><svg class="i v"><use href="#vw"/></svg><svg class="i v"><use href="#vh"/></svg>
      <hr class="hs">
      <div class="vc"><svg class="i"><use href="#x6"/></svg><b class="c"></b></div>
      <div class="vc"><svg class="i"><use href="#vt"/></svg><b class="c"></b></div>
      <div class="fillbar"></div>
    </aside>

    <section class="ops">
      <div class="ops-title"><span>Operations Manager</span><b class="mini">&#9662;</b><b class="mini">&#215;</b></div>
      <div class="tabs"><span class="tab on">Toolpaths</span><span class="tab">Solids</span></div>
      <div class="opstools">
        <svg class="i"><use href="#t-ok"/></svg><svg class="i"><use href="#t-x"/></svg><b class="s"></b><svg class="i"><use href="#t-t"/></svg><svg class="i"><use href="#t-t"/></svg><b class="s"></b><svg class="i"><use href="#sq9"/></svg><svg class="i"><use href="#t-bk"/></svg><svg class="i"><use href="#t-g"/></svg><svg class="i"><use href="#t-t"/></svg><b class="s"></b><svg class="i"><use href="#t-pen"/></svg><b class="s"></b><svg class="i"><use href="#t-q"/></svg>
      </div>
      <div class="opstools two">
        <svg class="i"><use href="#t-lock"/></svg><svg class="i"><use href="#t-wav"/></svg><svg class="i"><use href="#t-lock2"/></svg><b class="s"></b><svg class="i"><use href="#t-dn"/></svg><svg class="i"><use href="#t-up"/></svg><svg class="i"><use href="#t-rc"/></svg><svg class="i"><use href="#t-dia"/></svg><b class="s"></b><svg class="i"><use href="#t-ws"/></svg><svg class="i"><use href="#t-rf"/></svg>
      </div>
      <div class="tree">
        <svg class="guides" aria-hidden="true"><path d="M7.500 5.500v10M7.500 5.500h5M7.500 14.500h5M18.500 18v49M18.500 24h5M18.500 68h5M28.500 24v40M28.500 33h5M28.500 42h5M28.500 50h5M28.500 59h5M29.500 72v34M29.500 77h4M29.500 95h4M29.500 104h4" fill="none" stroke="#b5b5b5"/></svg>
        <div class="node n0"><b class="ex">+</b><svg class="ti"><use href="#mg"/></svg><span>Machine Group-1</span></div>
        <div class="node n0"><b class="ex">&#8722;</b><svg class="ti"><use href="#mg"/></svg><span>Machine Group-2</span></div>
        <div class="node n1"><b class="ex">&#8722;</b><svg class="ti"><use href="#prop"/></svg><span>Properties - Mill Default</span></div>
        <div class="node n2"><svg class="ti"><use href="#folder"/></svg><span>Files</span></div>
        <div class="node n2"><svg class="ti"><use href="#vk"/></svg><span>Tool settings</span></div>
        <div class="node n2"><svg class="ti"><use href="#stock"/></svg><span>Stock setup</span></div>
        <div class="node n2"><svg class="ti"><use href="#warn"/></svg><span>Safety zone</span></div>
        <div class="node n1"><b class="ex">&#8722;</b><svg class="ti"><use href="#tpg"/></svg><span>Toolpath Group-1</span></div>
        <div class="node n3"><b class="ex">+</b><svg class="ti"><use href="#op"/></svg><span>1 - Facing - [WCS: TOP] - [Tplane: TOP]</span></div>
        <div class="node n3"><b class="ex ghost"></b><svg class="ti"><use href="#flag"/></svg></div>
        <div class="node n3"><b class="ex">+</b><svg class="ti"><use href="#op"/></svg><span>2 - Surface High Speed (Area clearance) - [WCS:</span></div>
        <div class="node n3 cur"><b class="ex">+</b><svg class="ti"><use href="#opk"/></svg><span>3 - Surface High Speed (Scallop) - [WCS: TOP] -</span></div>
        <div class="hscroll"><b class="arrow">&#9666;</b><i class="thumb"></i><b class="arrow">&#9656;</b></div>
      </div>
    </section>

    <div class="view">
      <svg class="model" viewBox="207 92 576 371" role="img" aria-label="Mastercam isometric view of the milled block">
        <rect x="207" y="92" width="576" height="371" fill="#000099"/>
        <path d="M247 228L321 293L358 325L383 346L420 378L495 443V463H447L247 289Z" fill="#777790"/>
        <path d="M495 443L741 319V381L580 463H495Z" fill="#6f6f88"/>
        <path d="M321 293C323 315 340 338 350 338C356 338 359 335 358 325L588 209C578 200 569 185 567 168Z" fill="url(#floor1)"/>
        <path d="M364 182L377 173L386 157L447 207L440 245L412 223Z" fill="url(#groove1)"/>
        <g filter="url(#soft)">
          <path d="M408 218L447 207L493 207L506 243L434 278L415 292L398 258Z" fill="#c6c6ee"/>
          <path d="M420 208L470 247" stroke="#fff" stroke-width="8" fill="none"/>
          <path d="M452 214Q470 221 495 212" stroke="#a0a0c4" stroke-width="4" fill="none"/>
          <ellipse cx="498" cy="229" rx="7" ry="13" fill="#a4a4c8"/>
          <ellipse cx="480" cy="222" rx="7" ry="4" fill="#fff"/>
          <ellipse cx="415" cy="254" rx="6" ry="13" fill="#5a5a76"/>
          <ellipse cx="425" cy="272" rx="7" ry="10" fill="#9a9abd"/>
        </g>
        <path d="M358 325L588 209L604 201L628 222L383 346Z" fill="url(#pad)"/>
        <path d="M383 346C385 365 400 390 412 390C418 391 421 385 420 378L649 262C639 252 630 240 628 222Z" fill="url(#floor2)"/>
        <path d="M561 353L587 333L634 373C632 388 620 398 612 399C606 399 603 396 601 392Z" fill="url(#groove2)"/>
        <path d="M500 338L583 295L587 333L561 353C545 338 520 330 500 338Z" fill="url(#pad)"/>
        <path d="M575 303C560 310 551 318 552 326C553 338 558 346 561 353L587 333C578 325 574 315 575 303Z" fill="#d4d4fc"/>
        <path d="M247 228L355 174L364 182L412 223C414 234 410 243 398 255L322 293Z" fill="url(#pad)"/>
        <path d="M386 157L492 103L567 168L493 207C480 214 460 214 447 207Z" fill="url(#pad)"/>
        <path d="M355 174L386 157L377 173L364 182Z" fill="#000099"/>
        <path d="M561 353L601 392L495 443L420 378L500 338C520 330 545 338 561 353Z" fill="url(#pad)"/>
        <path d="M634 373L741 319L666 254L649 262L583 295C574 301 572 318 587 333Z" fill="url(#pad)"/>
        <g fill="none" stroke="#35d835" stroke-width=".9">
          <path d="M247 228L355 174M386 157L492 103M247 228V289"/>
          <path d="M322 293L398 255C410 246 414 234 412 223L364 182M386 157L447 207C460 214 480 214 493 207L567 168"/>
          <path d="M321 293C323 315 340 338 350 338C356 338 359 335 358 325M383 346C385 365 400 390 412 390C418 391 421 385 420 378"/>
          <path d="M383 346L628 222M495 443L741 319M364 182C370 178 380 172 385 158"/>
          <path d="M420 378L500 338C520 330 545 338 563 352L601 392M634 373L587 333C572 318 574 301 583 295L649 262"/>
          <path d="M634 373C632 388 620 398 612 399C606 399 603 396 601 392"/>
          <path d="M575 303C560 310 551 318 552 326C553 338 558 346 561 353M587 333C585 340 575 348 568 350"/>
          <path d="M412 228C422 227 433 217 437 203M425 230C432 245 437 265 434 275C430 282 420 288 415 290M399 260C400 270 406 283 415 290"/>
          <path d="M428 232C445 243 465 252 480 252L506 243C500 235 493 225 492 213"/>
          <path d="M567 168C569 185 578 200 588 209M628 222C630 240 639 252 649 262"/>
        </g>
        <g fill="none" stroke="#7fe07f" stroke-width=".7">
          <path d="M358 325L588 209M420 378L500 338M583 295L649 262M434 275L506 243"/>
        </g>
        <g fill="none">
          <path d="M247 228L495 443" stroke="#35c835" stroke-width=".9"/>
          <path d="M247 228L495 443M247 228V250" stroke="#e04050" stroke-width=".9" stroke-dasharray="6 8"/>
          <path d="M247 289L447 463" stroke="#2a8a3a" stroke-width=".8" stroke-dasharray="3 3"/>
          <path d="M492 103L741 319" stroke="#e06070" stroke-width=".8" stroke-dasharray="2 12"/>
          <path d="M567 168L604 201M628 222L666 254" stroke="#127a40" stroke-width=".9"/>
          <path d="M604 201L628 222M666 254L741 319" stroke="#d85060" stroke-width=".7" stroke-dasharray="2 6"/>
          <path d="M355 174L386 157" stroke="#c02848" stroke-width=".9" stroke-dasharray="4 2"/>
          <path d="M495 443V463" stroke="#d84050" stroke-width="1"/>
          <path d="M283 93L712 463" stroke="#8e6242" stroke-width=".9"/>
          <path d="M207 418L495 274L783 127" stroke="#8e6242" stroke-width=".9"/>
          <path d="M383 331L495 274L617 211" stroke="#b8a2a0" stroke-width="1"/>
          <path d="M493 93V273" stroke="#a07a5c" stroke-width="1.300"/>
        </g>
        <g fill="none" stroke="#c8b038" stroke-width=".9"><path d="M716.500 443V456M769.500 443V456M716 450H770"/></g>
        <g fill="none" stroke-width="1"><path d="M229 431V425" stroke="#1ec05a"/><path d="M229 431L240 437" stroke="#e02020"/><path d="M229 431L222 436" stroke="#2050ff"/></g>
        <rect x="224" y="425" width="8" height="8" fill="#0a0acc"/>
        <text x="241" y="437" class="tx-x">X</text>
        <text x="211" y="456" class="tx-v">Gview:Not Saved</text>
        <text x="270" y="456" class="tx-v">WCS:TOP</text>
        <text x="304" y="456" class="tx-v">T/Cplane:TOP</text>
        <text x="731" y="448" class="tx-s">2.606</text>
        <text x="729" y="456" class="tx-v">Inch</text>
      </svg>
    </div>

    <aside class="rightbar">
      <div class="rtop"><svg class="i v"><use href="#r1"/></svg><svg class="i v"><use href="#r2"/></svg></div>
      <div class="rfill"></div>
      <div class="rbot">
        <div class="grip"></div>
        <svg class="i v"><use href="#r3"/></svg><svg class="i v"><use href="#r4"/></svg><svg class="i v"><use href="#plus"/></svg><svg class="i v"><use href="#r5"/></svg><svg class="i v"><use href="#r6"/></svg><svg class="i v"><use href="#r7"/></svg><svg class="i v"><use href="#r8"/></svg><svg class="i v"><use href="#r9"/></svg><svg class="i v"><use href="#globe"/></svg><svg class="i v"><use href="#stop"/></svg>
        <hr class="hs">
        <svg class="i v"><use href="#r10"/></svg><svg class="i v"><use href="#r11"/></svg><svg class="i v"><use href="#r12"/></svg>
        <hr class="hs">
      </div>
    </aside>
  </main>

  <footer class="status">
    <span class="help">For help, press Alt+H.</span>
    <span class="sb w13">3D</span><span class="sb w25">Gview</span><span class="sb w20">Planes</span>
    <span class="z">Z</span><span class="yin">0.0</span><b class="c tw"></b>
    <span class="green">10</span><span class="blk"></span>
    <span class="lvl">Level</span><span class="white">1</span>
    <span class="sb w33">Attributes</span>
    <span class="drop w18"><i class="pt">+</i></span><span class="drop w33"><i class="lw thick"></i></span><span class="drop w36"><i class="lw"></i></span>
    <span class="sb w22">WCS</span><span class="sb w29">Groups</span><span class="sb w5">!</span><span class="sb w5">?</span>
  </footer>

  <div class="task">
    <svg class="wall" aria-hidden="true"><rect width="800" height="23" fill="#555c64"/><rect width="800" height="23" filter="url(#cloud)"/></svg>
    <div class="orbcell"><svg class="orb" viewBox="0 0 22 22"><circle cx="11" cy="11" r="10.500" fill="url(#orb)" stroke="#16304e"/><path d="M6 7l4.500-1v4.500H6z" fill="#e8502a"/><path d="M11.500 5.800l4.500-1v5.200h-4.500z" fill="#7cb82c"/><path d="M6 11.500h4.500V16L6 15z" fill="#2a8ae0"/><path d="M11.500 11.500H16V17l-4.500-1z" fill="#f4bc20"/></svg></div>
    <div class="tbtn on1"><svg class="ti2" viewBox="0 0 22 22"><text x="11" y="19" class="ie">e</text><ellipse cx="11" cy="11" rx="10" ry="4.500" transform="rotate(-35 11 11)" fill="none" stroke="#f4c430" stroke-width="1.200"/></svg></div>
    <div class="tbtn"><svg class="ti2" viewBox="0 0 22 22"><path d="M1 19V5h7l2 2h11v12z" fill="#f0d68c"/><path d="M1 11h20v8H1z" fill="#f8e8b0"/><path d="M5 14h12v8H5z" fill="#b0d4f0"/></svg></div>
    <div class="tbtn"><svg class="ti2" viewBox="0 0 22 22"><path d="M3 4h15v15H3z" fill="#5aa7d8"/><path d="M5 6h11v11H5z" fill="#e8f0f8"/><path d="M8 7l7 4.500L8 16z" fill="#f08020"/></svg></div>
    <div class="tbtn"><svg class="ti2" viewBox="0 0 22 22"><circle cx="11" cy="11" r="9.500" fill="#e03a2a"/><path d="M11 11L3 17a9.500 9.500 0 0 0 13 2z" fill="#35a545"/><path d="M11 11l8-3a9.500 9.500 0 0 1-3 11z" fill="#f6c823"/><circle cx="11" cy="11" r="4.600" fill="#4a8af0" stroke="#fff" stroke-width="1.400"/></svg></div>
    <div class="tbtn act"><span class="x6">X</span><span class="x6s">6</span></div>
    <div class="tbtn act2"><span class="xred">X</span></div>
    <div class="tray">
      <span>ES</span>
      <svg class="ti2 sm" viewBox="0 0 13 13"><circle cx="6.500" cy="6.500" r="5.500" fill="#1a4fb5"/><text x="6.500" y="10" class="wt">?</text></svg>
      <svg class="ti2 sm" viewBox="0 0 13 13"><path d="M6 3l3-2M5 6l3-2" stroke="#ddd" stroke-width="1.200"/><circle cx="5" cy="11" r="1.400" fill="#eee"/></svg>
      <svg class="ti2 sm" viewBox="0 0 13 13"><path d="M3.500 8.500h6L6.500 5z" fill="#eee"/></svg>
      <svg class="ti2 sm" viewBox="0 0 13 13"><path d="M3 1v11" stroke="#ddd"/><path d="M4 2h6v6H4z" fill="#eee"/><circle cx="9" cy="9" r="3" fill="#d81e1e"/></svg>
      <svg class="ti2 sm" viewBox="0 0 13 13"><path d="M2 3h9v7H2z" fill="none" stroke="#e8e8e8"/><path d="M4 11h5M1 5l3 2" stroke="#e8e8e8"/></svg>
      <svg class="ti2 sm" viewBox="0 0 13 13"><path d="M2 5h2l3-3v9L4 8H2z" fill="#eee"/><path d="M9 4c1 1.500 1 3.500 0 5" fill="none" stroke="#ddd"/></svg>
      <div class="clock"><span>08:33 p.m.</span><span>12/03/2013</span></div>
      <i class="show"></i>
    </div>
  </div>
</div>
</body>
</html>
```

FILE: styles.css
```css
* { box-sizing: border-box; }
html, body { margin: 0; padding: 0; }
body { width: 800px; height: 500px; overflow: hidden; font-family: "Liberation Sans", Arial, sans-serif; color: #333; background: #f0f0f0; }
.defs { position: absolute; width: 0; height: 0; }
.app { width: 800px; height: 500px; display: flex; flex-direction: column; }
.title, .menu, .row, .ribbon, .leftbar, .ops, .rightbar, .status, .task { filter: blur(.3px); }
.i { width: 13px; height: 13px; flex: none; display: block; }
.g { display: block; flex: none; height: 1px; }
.g1 { width: 1px; } .g2 { width: 2px; } .g3 { width: 3px; } .g4 { width: 4px; } .g7 { width: 7px; } .g8 { width: 8px; } .g11 { width: 11px; } .g20 { width: 20px; } .g21 { width: 21px; } .g23 { width: 23px; } .g33 { width: 33px; }
.c { flex: none; width: 8px; height: 13px; display: flex; align-items: center; justify-content: center; }
.c::after { content: ""; border: 2.500px solid transparent; border-top: 3px solid #222; border-bottom: 0; }
.s { flex: none; width: 4px; height: 12px; position: relative; }
.s::after { content: ""; position: absolute; left: 1px; top: 0; bottom: 0; width: 1px; background: #b8b8b8; }
.title { position: relative; height: 13px; flex: none; display: flex; align-items: center; overflow: hidden; }
.wall { position: absolute; left: 0; top: 0; width: 800px; height: 100%; }
.title-text { position: relative; margin-left: 12px; font-size: 6.300px; color: #111; white-space: pre; text-shadow: 0 0 3px #dfe6f0; }
.winbtns { position: absolute; right: 0; top: 0; height: 10px; width: 59px; display: flex; border: 1px solid #6c7a8c; border-top: 0; border-radius: 0 0 3px 3px; }
.wb { flex: 1; background: linear-gradient(#b9c3cf, #7f8fa4); color: #fff; font-size: 7px; line-height: 8px; text-align: center; border-right: 1px solid #6c7a8c; }
.wb-x { flex: 1.800; background: linear-gradient(#d8807a, #b0352a); border: 0; font-weight: bold; font-size: 9px; }
.menu { height: 10px; flex: none; display: flex; gap: 7.200px; padding-left: 4px; align-items: center; background: #f2f2f2; font-size: 6.700px; color: #222; }
.row { flex: none; display: flex; align-items: stretch; background: linear-gradient(#dde3f1, #d4dbee); }
.r1 { height: 17.500px; border-top: 2px solid #fbfbfb; }
.r2 { height: 16.500px; }
.r3 { height: 17px; }
.r1 .tb, .r2 .tb { padding-top: 1px; }
.tb { display: flex; align-items: center; background: #f0f0f0; border-bottom: 1px solid #d4d4d4; }
.tbe { flex: 1; }
.p2 { padding-left: 2px; } .p4 { padding-left: 4.500px; } .p6 { padding-left: 6px; } .p7 { padding-left: 7px; } .p8 { padding-left: 8px; }
.ybar { display: flex; align-items: center; background: #fbf9cf; border-bottom: 1px solid #d8d8c0; }
.coords { width: 248px; padding-left: 3px; }
.sel { width: 317px; padding-left: 6px; }
.ax { flex: none; width: 12px; height: 12px; margin-right: 2px; background: #efefef; border: 1px solid #b8b8b8; font-size: 7px; text-align: center; line-height: 10px; text-decoration: underline; }
.field { flex: none; height: 11px; background: #fff; border: 1px solid #d4d4d4; font-size: 6.500px; line-height: 9px; padding-left: 1px; position: relative; color: #444; }
.field::after { content: ""; position: absolute; right: 4px; top: 3px; border: 2px solid transparent; border-top: 3px solid #888; }
.f40 { width: 40px; }
.cg1 { width: 10px; }
.cg1::after { border-top-color: #888; }
.btn { flex: none; height: 11px; padding: 0; margin-right: 6px; font: 6.500px "Liberation Sans", Arial, sans-serif; color: #333; background: linear-gradient(#fafafa, #e2e2e2); border: 1px solid #8a8a8a; border-radius: 2px; }
.b25 { width: 25px; }
.combo { flex: none; width: 38px; height: 11px; border: 1px solid #8a8a8a; background: #fff; font-size: 6.500px; line-height: 9px; padding-left: 2px; position: relative; }
.combo::after { content: ""; position: absolute; right: 2px; top: 3px; border: 2.500px solid transparent; border-top: 3px solid #111; }
.ribbon { height: 16px; flex: none; background: #f4f4f4; border-top: 1px solid #c8c8c8; font-size: 6.500px; line-height: 17px; color: #333; padding-left: 104px; }
.body { height: 373px; flex: none; display: flex; border-top: 2px solid #a8a8a8; background: #f0f0f0; }
.leftbar { width: 25px; flex: none; display: flex; flex-direction: column; background: #f0f0f0; padding-left: 2px; border-right: 1px solid #b4b4b4; }
.grip { height: 5px; flex: none; margin: 1px 3px 0; background: radial-gradient(circle, #b4b4b4 .6px, transparent .7px) 0 0 / 3px 3px; }
.v { margin-bottom: -.500px; }
.leftbar .grip { margin-bottom: 0; margin-top: 1px; height: 6px; }
.vc { display: flex; width: 23px; margin-bottom: -.500px; flex: none; }
.hs { width: 19px; height: 1px; margin: 1.500px 0; border: 0; background: #b4b4b4; flex: none; }
.fillbar { flex: 1; margin-left: -2px; margin-top: 2px; margin-right: -1px; background: #d5dcee; border-top: 1px solid #c8c8c8; }
.ops { width: 182px; flex: none; display: flex; flex-direction: column; padding: 0 3px 2px 2px; background: #f0f0f0; border-right: 1px solid #c8c8c8; }
.ops-title { height: 10px; flex: none; margin-top: 1px; padding-left: 1px; display: flex; gap: 2px; align-items: center; background: #adadad; font-size: 5.900px; color: #222; }
.ops-title span { flex: 1; }
.mini { width: 9px; height: 9px; background: #e4e4e4; border: 1px solid #888; font-size: 7px; line-height: 7px; text-align: center; font-weight: normal; }
.tabs { display: flex; height: 12px; flex: none; margin-top: 1px; border-bottom: 1px solid #aaa; }
.tab { padding: 2px 2px 0; font-size: 6px; background: #e0e0e0; border: 1px solid #aaa; border-bottom: 0; margin-top: 1px; color: #444; }
.tab.on { background: #f8f8f8; padding: 1px 3px 0; margin-top: 0; margin-left: -1px; color: #222; }
.opstools { height: 17px; flex: none; display: flex; align-items: center; padding-left: 2px; border-bottom: 1px solid #c8c8c8; margin-right: 22px; }
.two { height: 16px; border-bottom: 0; }
.tree { position: relative; flex: 1; margin-top: 3px; background: #fff; border: 1px solid #b8b8b8; padding-top: 1px; overflow: hidden; }
.guides { position: absolute; left: 1px; top: 0; width: 60px; height: 120px; }
.node { position: relative; height: 8.900px; display: flex; align-items: center; font-size: 5.900px; white-space: nowrap; color: #333; }
.ex { flex: none; width: 5px; height: 5px; background: #f4f4f4; border: 1px solid #aaa; font-size: 5px; line-height: 3px; text-align: center; font-weight: normal; color: #333; }
.ghost { visibility: hidden; }
.ti { width: 9px; height: 9px; flex: none; margin: 0 3px 0 3px; }
.n0 { padding-left: 5px; }
.n1 { padding-left: 16px; }
.n2 { padding-left: 31px; }
.n3 { padding-left: 27px; }
.n3 .ti { margin-right: 1px; }
.cur span { background: #3399ff; color: #fff; padding-left: 1px; flex: 1; height: 8px; line-height: 8px; }
.hscroll { position: absolute; left: 1px; right: 1px; bottom: 0; height: 11px; display: flex; align-items: center; gap: 3px; background: #f0f0f0; padding: 0 2px; }
.arrow { font-size: 5px; font-weight: normal; width: 8px; text-align: center; color: #444; }
.thumb { width: 114px; height: 8px; background: linear-gradient(#f4f4f4, #cfcfcf); border: 1px solid #a8a8a8; border-radius: 1px; }
.view { width: 576px; height: 371px; flex: none; }
.model { display: block; width: 576px; height: 371px; font-family: "Liberation Sans", Arial, sans-serif; }
.tx-v { font-size: 6.400px; fill: #c8d2ea; }
.tx-s { font-size: 7px; font-weight: bold; fill: #22e048; }
.tx-x { font-size: 6px; fill: #e02020; }
.rightbar { flex: 1; display: flex; flex-direction: column; padding-left: 1px; }
.rightbar .i { margin-left: 1px; }
.rtop { height: 128px; flex: none; padding-top: 5px; background: #f2f2f2; border-right: 2px solid #dde3f1; }
.rfill { height: 38px; flex: none; background: #d5dcee; margin-left: -1px; border-bottom: 1px solid #bbb; }
.rbot { flex: 1; background: #f2f2f2; }
.rbot .grip { margin: 2px 2px 0; height: 4px; }
.rbot .hs { width: 13px; margin: 1px 2px; }
.status { height: 14px; flex: none; display: flex; align-items: center; background: #eeebe8; padding-top: 2px; font-size: 6.500px; color: #333; border-top: 1px solid #fafafa; }
.help { width: 362px; padding-left: 1px; font-size: 6.900px; flex: none; }
.sb { flex: none; height: 10px; line-height: 8px; text-align: center; border: 1px solid #cfcfcf; background: #f6f6f6; margin-right: 3px; font-size: 6.300px; }
.w13 { width: 13px; } .w25 { width: 26px; } .w20 { width: 20px; } .w33 { width: 33px; } .w22 { width: 22px; } .w29 { width: 29px; } .w5 { width: 6px; }
.w5:last-child { margin-right: 0; }
.z { width: 7px; text-decoration: underline; flex: none; }
.yin { flex: none; width: 35px; height: 9px; background: #fbf97e; line-height: 9px; padding-left: 2px; }
.tw { width: 14px; }
.green { flex: none; width: 17px; height: 9px; background: #22f01f; text-align: center; line-height: 9px; color: #111; }
.blk { flex: none; width: 7px; height: 9px; margin: 0 4px 0 2px; background: #e8e8e8; position: relative; border: 1px solid #bbb; }
.blk::after { content: ""; position: absolute; left: .500px; top: 2px; border: 2.500px solid transparent; border-top: 4px solid #111; border-bottom: 0; }
.lvl { flex: none; width: 17px; }
.white { flex: none; width: 57px; height: 9px; line-height: 9px; background: #fff; margin-right: 3px; padding-left: 2px; position: relative; }
.white::after { content: ""; position: absolute; right: 3px; top: 3px; border: 2.500px solid transparent; border-top: 3px solid #111; border-bottom: 0; }
.drop { flex: none; height: 9px; background: #fff; margin-right: 4px; position: relative; display: flex; align-items: center; padding: 0 8px 0 2px; }
.drop::after { content: ""; position: absolute; right: 2px; top: 3px; border: 2.500px solid transparent; border-top: 3px solid #111; border-bottom: 0; }
.w18 { width: 18px; } .w36 { width: 36px; }
.pt { font-style: normal; font-size: 8px; line-height: 8px; }
.lw { display: block; width: 100%; height: 1px; background: #aaa; }
.thick { height: 2px; background: #111; }
.task { position: relative; height: 23px; flex: none; display: flex; align-items: center; overflow: hidden; }
.orbcell { position: relative; flex: none; width: 33px; padding-left: 4px; display: flex; }
.orb { width: 22px; height: 22px; }
.tbtn { position: relative; flex: none; width: 32px; height: 22px; margin-right: 2px; display: flex; align-items: center; justify-content: center; border-radius: 2px; }
.on1 { background: rgba(190, 205, 220, .35); border: 1px solid rgba(220, 230, 240, .5); }
.ti2 { width: 20px; height: 20px; flex: none; }
.act { width: 33px; background: linear-gradient(#e4e4e4, #a8a8a8); border: 1px solid #eee; margin-left: 3px; margin-right: 1px; }
.act2 { width: 33px; background: rgba(190, 200, 210, .55); border: 1px solid #d0d8e0; margin: 0; }
.x6 { font: bold 17px "Liberation Serif", serif; color: #222; }
.x6s { font-size: 7px; color: #eee; margin-bottom: 9px; }
.xred { display: block; width: 18px; height: 20px; background: #fff; font: italic bold 22px/20px "Liberation Sans", sans-serif; text-align: center; color: #d00000; text-shadow: 1px 0 #000; }
.ie { font: italic bold 22px "Liberation Sans", sans-serif; fill: #2f8fdc; text-anchor: middle; }
.tray { position: absolute; right: 0; top: 0; bottom: 0; display: flex; align-items: center; color: #eee; font-size: 7px; }
.tray > span { margin-right: 2px; }
.sm { width: 13px; height: 13px; }
.clock { display: flex; flex-direction: column; align-items: center; width: 39px; margin-left: 3px; font-size: 6.700px; line-height: 9px; color: #f2f2f2; }
.show { width: 7px; height: 23px; margin-left: 4px; background: rgba(255, 255, 255, .12); border-left: 1px solid rgba(255, 255, 255, .3); }
.wt { font-size: 8px; font-weight: bold; fill: #fff; text-anchor: middle; }
.qm { font: bold 8px "Liberation Sans", sans-serif; fill: #e03020; }
.qg { font: bold 10px "Liberation Sans", sans-serif; fill: #8a8a8a; text-anchor: middle; }
.qg1 { font: bold 7px "Liberation Serif", serif; fill: #9a9a9a; text-anchor: middle; }
```
